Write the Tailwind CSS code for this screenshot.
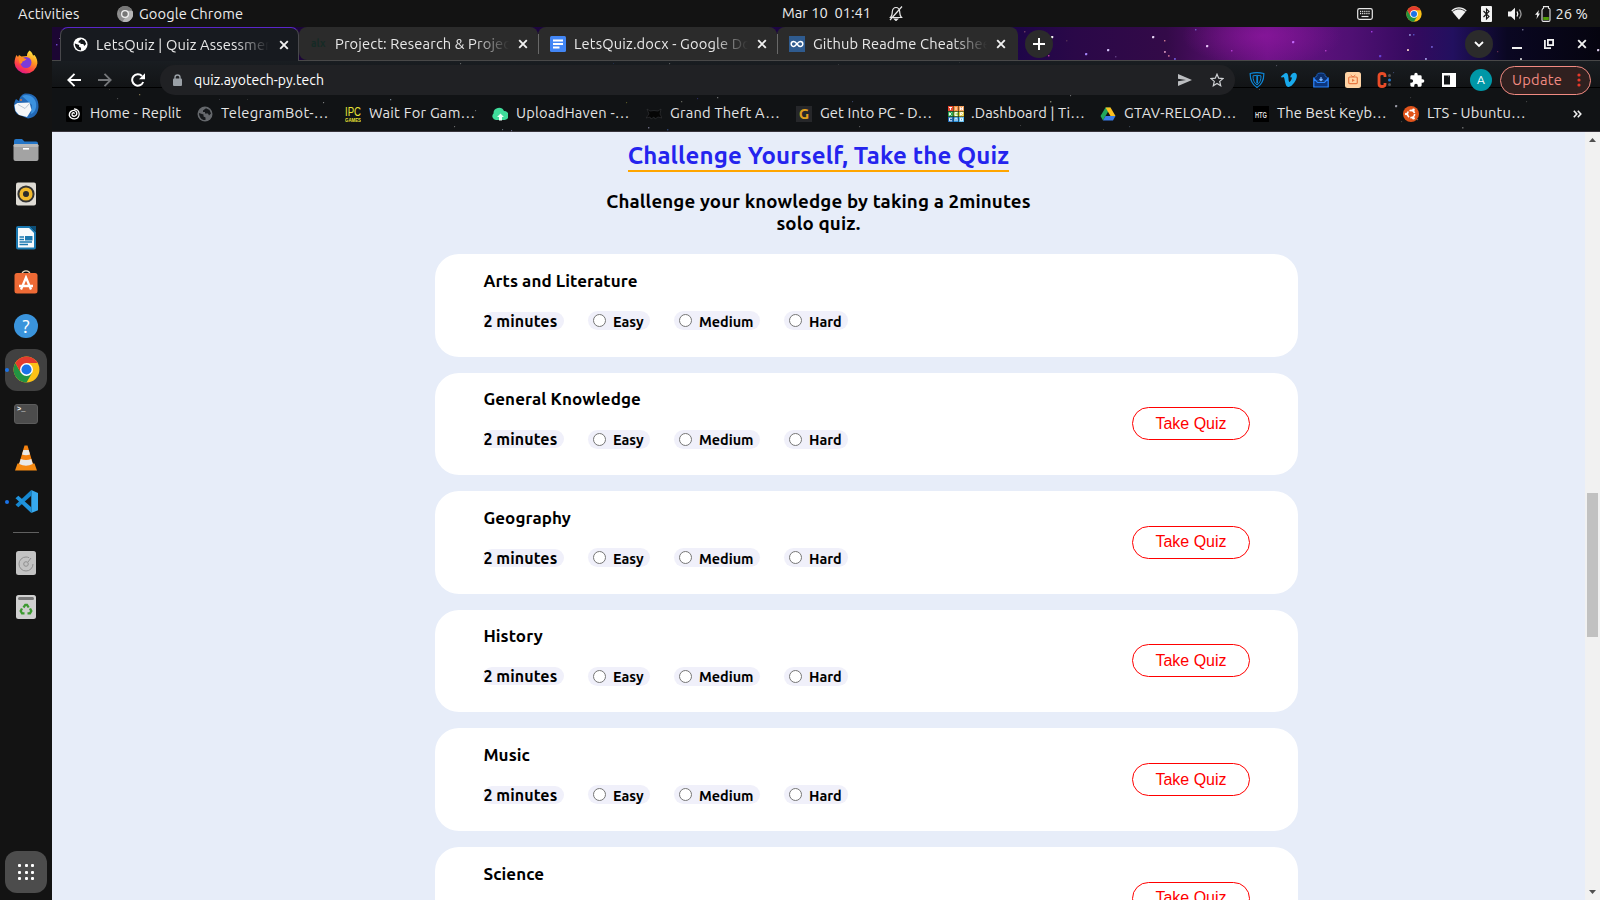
<!DOCTYPE html>
<html lang="en">
<head>
<meta charset="utf-8">
<title>LetsQuiz | Quiz Assessment</title>
<script src="https://cdn.jsdelivr.net/npm/@tailwindcss/browser@4"></script>
</head>
<body class="w-[1600px] h-[900px] overflow-hidden bg-[#131313] font-['Ubuntu','Noto_Sans',sans-serif] flex flex-col">

<svg class="hidden">
  <defs>
    <symbol id="chrome" viewBox="0 0 48 48">
      <circle cx="24" cy="24" r="23" fill="#fbc116"/>
      <path d="M4.100 12.500A23 23 0 0 0 24 47L34 29.700 24 24 14 29.700Z" fill="#229342"/>
      <path d="M4.100 12.500A23 23 0 0 1 43.900 12.500H24L14 29.700Z" fill="#e33b2e"/>
      <circle cx="24" cy="24" r="11.500" fill="#fff"/><circle cx="24" cy="24" r="9" fill="#1a73e8"/>
    </symbol>
    <symbol id="globe" viewBox="0 0 16 16">
      <circle cx="8" cy="8" r="7.500" fill="currentColor"/>
      <path d="M2 7 6.500 8.500V10.500L8.500 11.500V14C5 14.500 2 11.500 2 7ZM6 4.500 9 2.200 12.500 4 14 7.500 12 9.500 11 7.500H8V6H6Z" fill="#15181b"/>
    </symbol>
    <symbol id="x" viewBox="0 0 10 10"><path d="M1.200 1.200 8.800 8.800M8.800 1.200 1.200 8.800" stroke="#f1f1f1" stroke-width="1.900"/></symbol>
  </defs>
</svg>

<header class="h-[27px] shrink-0 flex items-center text-[14.670px] text-[#ececec] leading-none whitespace-nowrap">
  <span class="ml-[18px] w-[99px] pt-px tracking-[0.15px]">Activities</span>
  <svg class="size-4 mr-[6px]" viewBox="0 0 16 16"><circle cx="8" cy="8" r="8" fill="#8d8d8d"/><path d="M8 4.200H15A8 8 0 0 0 1.500 3.500L4.600 9.500Z" fill="#777"/><path d="M8 12 5.500 15.600A8 8 0 0 0 15.500 5H10Z" fill="#b5b5b5"/><circle cx="8" cy="8" r="4" fill="#f2f2f2"/><circle cx="8" cy="8" r="2.700" fill="#777"/></svg>
  <span class="w-[643px] pt-px tracking-[0.1px]">Google Chrome</span>
  <span class="w-[107px] whitespace-pre">Mar 10  01:41</span>
  <svg class="w-[14px] h-[15px] mr-[453.600px]" viewBox="0 0 14 15" fill="none" stroke="#e8e8e8" stroke-width="1.200"><path d="M1.500 11.500C3.500 9.500 3 8 3.300 5.500 3.700 2.500 5 1.500 7 1.500S10.300 2.500 10.700 5.500C11 8 10.500 9.500 12.500 11.500ZM1 14 13 0.500"/><path d="M5.500 13H8.500L7 14.500Z" fill="#e8e8e8"/></svg>
  <svg class="w-[16px] h-[12px] mr-[33px]" viewBox="0 0 16 12"><rect x=".7" y=".7" width="14.600" height="10.600" rx="1.800" fill="none" stroke="#e8e8e8" stroke-width="1.200"/><path d="M3 3.500H13M3 5.700H13" stroke="#e8e8e8" stroke-width="1.300" stroke-dasharray="1.200 .9"/><path d="M4.500 8.500H11.500" stroke="#e8e8e8" stroke-width="1.200"/></svg>
  <svg class="size-4 mr-[29px]"><use href="#chrome"/></svg>
  <svg class="w-[16px] h-[13px] mr-[14px]" viewBox="0 0 16 13"><path d="M.3 3.400C5-.9 11-.9 15.700 3.400L8 12.800Z" fill="#f2f2f2"/><path d="M1.300 4.600C5.500 1.200 10.500 1.200 14.700 4.600" fill="none" stroke="#131313" stroke-width=".8"/></svg>
  <svg class="w-[11px] h-[16px] mr-[16px]" viewBox="0 0 11 16"><rect width="11" height="16" rx="1" fill="#f2f2f2"/><path d="M2.500 5 8 10.500 5.500 13V3L8 5.500 2.500 11" fill="none" stroke="#131313" stroke-width="1.100"/></svg>
  <svg class="w-[15px] h-[14px] mr-[12px]" viewBox="0 0 15 14"><path d="M0 4.500H3L7 .8V13.200L3 9.500H0Z" fill="#f2f2f2"/><path d="M9 4.500Q10.600 7 9 9.500" fill="none" stroke="#f2f2f2" stroke-width="1.300"/><path d="M11.300 2.500Q14.800 7 11.300 11.500" fill="none" stroke="#999" stroke-width="1.300"/></svg>
  <svg class="w-[16px] h-[16px] mr-[5px]" viewBox="0 0 16 16"><path d="M4 4 0 8.800H2.200L1.500 13 5 7.600H3.200Z" fill="#f2f2f2"/><path d="M7.500 3.200Q7.500 2.500 8.500 2.300V.6H13.500V2.300Q15 2.500 15 3.500V14Q15 15.400 13.600 15.400H8.400Q7 15.400 7 14V4Z" fill="none" stroke="#e8e8e8" stroke-width="1.100"/><rect x="8.200" y="11" width="5.600" height="3" fill="#4e9a06"/></svg>
  <span class="pt-px">26 %</span>
</header>

<div class="flex flex-1 min-h-0">
  <nav class="w-[52px] shrink-0 flex flex-col items-center pt-[12.500px]">
    <div class="h-11 flex items-center"><svg class="size-[24px]" viewBox="0 0 24 24"><defs><linearGradient id="ff" x1=".8" y1="0" x2=".3" y2="1"><stop offset="0" stop-color="#fff14a"/><stop offset=".4" stop-color="#ff9a1f"/><stop offset=".75" stop-color="#ff3d4a"/><stop offset="1" stop-color="#d9158c"/></linearGradient></defs><path d="M15.500.5C18 2 18.500 4 19 5.500L20.500 5C23 8 23.500 11 23.400 13.500A11.500 11.200 0 0 1 .5 13C.5 9.500 1.500 7 2.500 5L4 7 5 5 7.500 6.500 13 6C12.800 4 14 2 15.500.5Z" fill="url(#ff)"/><circle cx="12" cy="12.500" r="5.500" fill="#7b3bd8"/><path d="M4.500 8.500C7 7 10 7.500 12.500 9.500 10.500 10.500 9 11.500 8.500 11.500 8 14 6.500 14 5.500 13Z" fill="#ff8a22"/></svg></div>
    <div class="h-11 flex items-center"><svg class="size-[26px]" viewBox="0 0 26 26"><path d="M13 .5C22 .5 25.800 6 25.500 14 25 20 22 25 15 25.500L4 21C0 16 .5 10 3 6L6 8C6.500 3 10 .5 13 .5Z" fill="#2268b5"/><path d="M9 3C15 0 22 4 23 10 24 16 21 20 18 21L19 12Z" fill="#3b92e0"/><path d="M1.500 12 4.500 10 16.500 9.500 18.500 17 14 24 6 22 2.500 18Z" fill="#f4f6f8"/><path d="M5 11.500 12 15.500 17 10" fill="none" stroke="#b9c6d3"/><circle cx="8" cy="7" r="1" fill="#d8733b"/></svg></div>
    <div class="h-11 flex items-center"><svg class="w-[26px] h-[24px]" viewBox="0 0 26 24"><path d="M1 3Q1 1 3 1H9L11.500 3.500H23Q25 3.500 25 5.500V12H1Z" fill="#2476c8"/><rect x=".5" y="6" width="25" height="17" rx="2" fill="#a3a3a3"/><rect x=".5" y="6" width="25" height="3" rx="1.500" fill="#b9b9b9"/><rect x="10" y="10" width="6" height="1.600" fill="#fff"/></svg></div>
    <div class="h-11 flex items-center"><svg class="w-[22px] h-[24px]" viewBox="0 0 22 24"><rect x="1" y=".5" width="20" height="23" rx="2" fill="#dedbd4"/><circle cx="11" cy="12" r="8.600" fill="#333"/><circle cx="11" cy="12" r="4.800" fill="none" stroke="#f0b92c" stroke-width="3.600"/><circle cx="11" cy="12" r="2.600" fill="#2b2b2b"/></svg></div>
    <div class="h-11 flex items-center"><svg class="w-[22px] h-[24px]" viewBox="0 0 22 24"><path d="M3 1H14.500L20 6.500V21.500Q20 22.500 19 22.500H3Q2 22.500 2 21.500V2Q2 1 3 1Z" fill="#f7fafc" stroke="#1a78b0" stroke-width="2"/><path d="M15 0H21V6Z" fill="#0d4f78"/><path d="M4.500 11H9M4.500 13.500H9M4.500 16H17M4.500 18.500H13" stroke="#1a78b0" stroke-width="1.300"/><rect x="10" y="10" width="7.500" height="4.500" fill="#1a78b0"/></svg></div>
    <div class="h-11 flex items-center"><svg class="w-[24px] h-[24px]" viewBox="0 0 24 24"><path d="M8 4Q8.500.8 12 .8T16 4" fill="none" stroke="#e8d9c0" stroke-width="1.300"/><rect x=".5" y="3" width="23" height="20.500" rx="2.500" fill="#ee6a35"/><path d="M7 19.500 12 7.500 17 19.500M5 16H19" fill="none" stroke="#fff" stroke-width="2.300"/></svg></div>
    <div class="h-11 flex items-center"><div class="size-6 rounded-full bg-[#3a94dc] text-white text-[19px] leading-6 text-center">?</div></div>
    <div class="relative h-11 flex items-center"><div class="size-[42px] rounded-[12px] bg-[#414141] flex items-center justify-center"><svg class="size-[27px]"><use href="#chrome"/></svg></div><span class="absolute left-0 top-[20px] size-1 rounded-full bg-[#1a73e8]"></span></div>
    <div class="h-11 flex items-center"><div class="w-6 h-5 rounded-[3px] bg-[#4c4c4c] border border-[#5c5c5c] text-white font-['Liberation_Mono'] font-bold text-[7px] leading-[9px] pl-[2px]">&gt;_</div></div>
    <div class="h-11 flex items-center"><svg class="w-[22px] h-[26px]" viewBox="0 0 22 26"><path d="M2.500 18.500H19.500L22 25.500H0Z" fill="#f58a12"/><path d="M9.500 .5H12.500L18 19Q11 23.500 4 19Z" fill="#f58210"/><path d="M8.300 5H13.700L15 9.500Q11 11 7 9.500ZM5.700 14Q11 16 16.300 14L17.800 19Q11 22.500 4.200 19Z" fill="#e9e9e9"/></svg></div>
    <div class="relative h-11 w-[42px] flex items-center justify-center"><span class="absolute left-0 top-[20px] size-1 rounded-full bg-[#1a73e8]"></span><svg class="size-[23px]" viewBox="0 0 24 24"><path d="M17 0 24 3V21L17 24Z" fill="#36a8ee"/><path d="M17 0V6L3.500 18 .5 15.500Z" fill="#1587d1"/><path d="M17 24V18L3.500 6 .5 8.500Z" fill="#1f93dd"/></svg></div>
    <div class="h-[17px] flex items-center"><div class="w-[26px] h-px bg-[#606060]"></div></div>
    <div class="h-11 flex items-center"><svg class="w-[20px] h-[24px]" viewBox="0 0 20 24"><rect width="20" height="24" rx="2.500" fill="#c3c3c3"/><circle cx="10" cy="13" r="7" fill="none" stroke="#8f8f8f" stroke-dasharray="36 8"/><circle cx="10" cy="13" r="2.300" fill="none" stroke="#8f8f8f"/><path d="M12 11 15 7" stroke="#8f8f8f"/></svg></div>
    <div class="h-11 flex items-center"><svg class="w-[20px] h-[24px]" viewBox="0 0 20 24"><rect width="20" height="24" rx="2.500" fill="#d0d0d0"/><rect x="2" y="2" width="16" height="3" rx="1.500" fill="#777"/><path d="M7.500 12.500 9.300 9.800H11L12.700 12.500M14 13.500 15.300 16 14 18.300H11.500M8.500 18.300H6L4.700 16 6 13.500" fill="none" stroke="#3c9a30" stroke-width="2.300"/></svg></div>
    <div class="mt-auto mb-[7px] size-[42px] rounded-[12px] bg-[#4c4c4c] grid grid-cols-3 gap-[3.500px] p-[13px] place-items-center">
      <i class="size-[3px] bg-white rounded-[1px]"></i><i class="size-[3px] bg-white rounded-[1px]"></i><i class="size-[3px] bg-white rounded-[1px]"></i><i class="size-[3px] bg-white rounded-[1px]"></i><i class="size-[3px] bg-white rounded-[1px]"></i><i class="size-[3px] bg-white rounded-[1px]"></i><i class="size-[3px] bg-white rounded-[1px]"></i><i class="size-[3px] bg-white rounded-[1px]"></i><i class="size-[3px] bg-white rounded-[1px]"></i>
    </div>
  </nav>

  <div class="w-[1548px] flex flex-col">
    <div class="relative h-[105px] shrink-0 flex flex-col bg-[#131619] text-[14.670px] leading-none text-[#e4e4e4] tracking-[0.14px]">
      <svg class="absolute inset-0 w-[1548px] h-[105px]" viewBox="52 27 1548 105">
        <defs>
          <linearGradient id="sky"><stop offset="0" stop-color="#1c0633"/><stop offset=".62" stop-color="#1d0548"/><stop offset=".66" stop-color="#2a0848"/><stop offset=".72" stop-color="#330a48"/><stop offset=".785" stop-color="#6d1286"/><stop offset=".84" stop-color="#4f1073"/><stop offset=".88" stop-color="#340a5e"/><stop offset=".905" stop-color="#22105f"/><stop offset=".94" stop-color="#0a0722"/><stop offset="1" stop-color="#05040f"/></linearGradient>
          <radialGradient id="neb"><stop offset="0" stop-color="#9418a4" stop-opacity=".6"/><stop offset="1" stop-color="#9418a4" stop-opacity="0"/></radialGradient>
          <linearGradient id="bar" x2="0" y2="1"><stop offset="0" stop-color="#191d21"/><stop offset="1" stop-color="#121416"/></linearGradient>
        </defs>
        <rect x="52" y="27" width="1548" height="34" fill="url(#sky)"/>
        <ellipse cx="1262" cy="36" rx="80" ry="30" fill="url(#neb)"/>
        <rect x="52" y="61" width="1548" height="26" fill="url(#bar)"/>
        <rect x="52" y="88" width="1548" height="44" fill="#111315"/>
        <rect x="52" y="87" width="1548" height="1" fill="#000"/>
        <rect x="52" y="60" width="1548" height="1" fill="#484848"/>
        <rect x="52" y="131" width="1548" height="1" fill="#38343c"/>
        <g id="stars"></g>
      </svg>

      <div class="relative h-[34px] flex pl-[8px] text-[#e8e8e8]">
        <div class="w-[239px] h-[34px] rounded-t-[8px] bg-[#171a1f] border-t border-x border-t-[#5a26c9] border-x-[#48484c] flex items-center pl-[12px]">
          <svg class="size-[15px] mr-[8px] text-white"><use href="#globe"/></svg>
          <span class="w-[173px] overflow-hidden whitespace-nowrap pt-[6px] pb-1 mask-r-from-80% mask-r-to-100%">LetsQuiz | Quiz Assessment</span>
          <svg class="size-[10px] ml-[10px]"><use href="#x"/></svg>
        </div>
        <div class="w-[239px] h-[33px] rounded-t-[8px] rounded-bl-[8px] bg-[#2b2b2b] flex items-center pl-[12px]">
          <span class="w-[16px] mr-[8px] text-[#152a25] text-[10px] font-bold">alx</span>
          <span class="w-[174px] overflow-hidden whitespace-nowrap pt-[6px] pb-1 mask-r-from-80% mask-r-to-100%">Project: Research &amp; Project</span>
          <svg class="size-[10px] ml-[9px]"><use href="#x"/></svg>
        </div>
        <div class="w-[239px] h-[33px] rounded-t-[8px] bg-[#2b2b2b] flex items-center"><i class="w-px h-5 bg-[#686868] mr-[11px]"></i>
          <svg class="size-4 mr-[8px]" viewBox="0 0 16 16"><rect width="16" height="16" rx="1.500" fill="#4286f5"/><path d="M3 4.500H13M3 8H13M3 11.500H9.500" stroke="#fff" stroke-width="1.800"/></svg>
          <span class="w-[174px] overflow-hidden whitespace-nowrap pt-[6px] pb-1 mask-r-from-80% mask-r-to-100%">LetsQuiz.docx - Google Docs</span>
          <svg class="size-[10px] ml-[9px]"><use href="#x"/></svg>
        </div>
        <div class="w-[241px] h-[33px] rounded-t-[8px] bg-[#2b2b2b] flex items-center"><i class="w-px h-5 bg-[#686868] mr-[11px]"></i>
          <svg class="size-4 mr-[8px]" viewBox="0 0 16 16"><rect width="16" height="16" fill="#2f5b8f"/><path d="M8 8C6.500 5.800 5.500 5.500 4.700 5.500A2.500 2.500 0 0 0 4.700 10.500C6.500 10.500 9 5.500 11.300 5.500A2.500 2.500 0 0 1 11.300 10.500C10.500 10.500 9.500 10.200 8 8Z" fill="none" stroke="#fff" stroke-width="1.500"/></svg>
          <span class="w-[174px] overflow-hidden whitespace-nowrap pt-[6px] pb-1 mask-r-from-80% mask-r-to-100%">Github Readme Cheatsheet</span>
          <svg class="size-[10px] ml-[9px]"><use href="#x"/></svg>
        </div>
        <div class="ml-[7px] mt-[3px] size-7 rounded-full bg-[#2b2b2b] flex items-center justify-center"><svg class="size-3" viewBox="0 0 12 12"><path d="M6 0V12M0 6H12" stroke="#fff" stroke-width="2"/></svg></div>
        <div class="ml-auto mr-[13px] flex items-center h-[34px]">
          <div class="size-7 rounded-full bg-[#2b2b2b] flex items-center justify-center mr-[19px]"><svg class="w-[10px] h-[7px]" viewBox="0 0 10 7"><path d="M1 1 5 5 9 1" fill="none" stroke="#fff" stroke-width="1.800"/></svg></div>
          <svg class="w-[10px] h-[10px] mr-[22px]" viewBox="0 0 10 10"><path d="M0 9H10" stroke="#f1f1f1" stroke-width="2"/></svg>
          <svg class="w-[10px] h-[10px] mr-[23px]" viewBox="0 0 10 10" fill="none" stroke="#f1f1f1" stroke-width="1.800"><rect x="3.900" y=".9" width="5.200" height="5.200"/><path d="M.9 1V9.100H7"/></svg>
          <svg class="size-[10px]"><use href="#x"/></svg>
        </div>
      </div>

      <div class="relative h-[37px] flex items-center pl-[15px] pt-px">
        <svg class="size-[14px] mr-[17px]" viewBox="0 0 14 14" fill="none" stroke="#fff" stroke-width="1.900"><path d="M14 7H1.500M7.500 .8 1.300 7 7.500 13.200"/></svg>
        <svg class="size-[14px] mr-[19px]" viewBox="0 0 14 14" fill="none" stroke="#75777a" stroke-width="1.800"><path d="M0 7H12.500M6.500 .8 12.700 7 6.500 13.200"/></svg>
        <svg class="size-[14px] mr-[15px]" viewBox="0 0 14 14"><path d="M12.200 9A5.700 5.700 0 1 1 11 3" fill="none" stroke="#fff" stroke-width="2"/><path d="M14 .2V6.200H8Z" fill="#fff"/></svg>
        <div class="w-[1075px] h-[30px] rounded-full bg-[#202124] flex items-center pl-[13px]">
          <svg class="w-[9px] h-[12px] mr-[12px]" viewBox="0 0 9 12"><rect y="4.500" width="9" height="7.500" rx="1" fill="#9aa0a6"/><path d="M2 5V3.300Q2 1 4.500 1T7 3.300V5" fill="none" stroke="#9aa0a6" stroke-width="1.400"/></svg>
          <span class="text-[14px] text-white tracking-[0.04px]">quiz.ayotech-py.tech</span>
          <svg class="w-[14px] h-[12px] ml-auto mr-[18px]" viewBox="0 0 14 12"><path d="M0 0 14 6 0 12V7.300L8 6 0 4.700Z" fill="#bcbec1"/></svg>
          <svg class="size-[14px] mr-[11px]" viewBox="0 0 14 14"><path d="M7 1.200 8.700 5.200 13 5.600 9.700 8.400 10.700 12.700 7 10.400 3.300 12.700 4.300 8.400 1 5.600 5.300 5.200Z" fill="none" stroke="#d0d2d5" stroke-width="1.200"/></svg>
        </div>
        <div class="flex items-center gap-4 ml-[14px]">
          <svg class="size-4" viewBox="0 0 16 16" fill="none" stroke="#0d87d8"><path d="M1.200 1.500Q8-.2 14.800 1.500C15 8 12 13 8 15.500 4 13 1 8 1.200 1.500Z" stroke-width="1.200"/><path d="M4 3.800Q8 2.800 12 3.800C12 8 11 10.800 8 13 5 10.800 4 8 4 3.800Z"/><path d="M8.200 4V11.500" stroke-width="1.800"/></svg>
          <svg class="size-4" viewBox="0 0 16 16"><path d="M0 4.600C2 3 3.700 1.200 5 1.100 8.200.9 7 8.500 8.200 10 9 10.600 11.200 6.800 10.800 5.800 10.500 5 9.500 5.200 9 5.400 10 1.700 12.500.6 14 .9 19 2 13 14.500 7.500 15 3.500 15.500 4.200 4.500 2.200 5.100L.8 5.800Z" fill="#18a9ec"/></svg>
          <svg class="size-4" viewBox="0 0 16 16"><path d="M1.500 5.500 4 4V2.500Q4 1 8 1T12 2.500V4L14.500 5.500V9H1.500Z" fill="#0b2d68" stroke="#1d5cb4" stroke-width="1"/><path d="M.8 6.500V15H15.200V6.500L11.500 10.500H4.500Z" fill="#0d367c" stroke="#2b86ff" stroke-width="1.200"/><path d="M8 5V8.500M6.500 7 8 8.700 9.500 7" fill="none" stroke="#7db6ff" stroke-width="1.200"/></svg>
          <svg class="size-4" viewBox="0 0 16 16"><rect width="16" height="16" rx="2.500" fill="#ffd3a4"/><rect x="3.700" y="5" width="8.600" height="6.600" rx="1" fill="none" stroke="#e87843" stroke-width="1.200"/><path d="M5.700 3 8 5 10.300 3" fill="none" stroke="#e87843"/><path d="M7 6.700V10L9.800 8.300Z" fill="#e87843"/></svg>
          <svg class="size-4" viewBox="0 0 16 16"><path d="M8 5V3.500Q8 1.500 5 1.500T2 4V12Q2 14.500 5 14.500T8 12.500V11" fill="none" stroke="#ea4c28" stroke-width="2.800"/><circle cx="12.500" cy="3.500" r="1.500" fill="#555"/><circle cx="12.500" cy="8" r="1.500" fill="#2477c9"/><circle cx="12.500" cy="12.500" r="1.500" fill="#555"/></svg>
          <svg class="size-4" viewBox="0 0 24 24"><path d="M20.500 11H19V7a2 2 0 0 0-2-2h-4V3.500a2.500 2.500 0 0 0-5 0V5H4a2 2 0 0 0-2 2v3.800h1.500a2.700 2.700 0 0 1 0 5.400H2V20a2 2 0 0 0 2 2h3.800v-1.500a2.700 2.700 0 0 1 5.400 0V22H17a2 2 0 0 0 2-2v-4h1.500a2.500 2.500 0 0 0 0-5Z" fill="#fff"/></svg>
          <svg class="size-4" viewBox="0 0 16 16"><path d="M1 1H15V15H1ZM3 3.500V12.500H9V3.500Z" fill="#fff" fill-rule="evenodd"/></svg>
        </div>
        <div class="ml-[13px] size-[22px] shrink-0 rounded-full bg-[#0097a7] text-white text-[12px] leading-[22px] text-center">A</div>
        <div class="ml-[8px] w-[91px] h-[29px] shrink-0 rounded-full border border-[#f28b82] bg-[#30201f] text-[#f28b82] flex items-center pl-[11px]"><span class="w-[51px] tracking-[0.25px]">Update</span>
          <svg class="w-[4px] h-[14px] ml-[14px]" viewBox="0 0 4 14" fill="#e8392b"><circle cx="2" cy="2" r="1.600"/><circle cx="2" cy="7" r="1.600"/><circle cx="2" cy="12" r="1.600"/></svg></div>
      </div>

      <div class="relative h-[32px] flex items-center pl-[14px] pb-px whitespace-nowrap">
        <div class="w-[131px] flex items-center gap-2"><svg class="size-4" viewBox="0 0 16 16"><rect width="16" height="16" rx="1" fill="#000"/><path d="M8 8Q8.500 6.500 7.200 6.700T6 9Q7.500 11 9.500 9.800T10.500 6Q8.500 3.700 5.800 4.800T3.300 9.500Q4.800 13.200 8.800 12.900T13.200 8Q13 3.200 8 2.800" fill="none" stroke="#fff" stroke-width="1.300"/></svg><span>Home - Replit</span></div>
        <div class="w-[148px] flex items-center gap-2"><svg class="size-4 text-[#65686c]"><use href="#globe"/></svg><span class="tracking-[0.3px]">TelegramBot-…</span></div>
        <div class="w-[147px] flex items-center gap-2"><svg class="size-4" viewBox="0 0 16 16"><g fill="#e8e337" font-family="Liberation Sans" letter-spacing="0"><text x="0" y="10" font-size="13" textLength="16" lengthAdjust="spacingAndGlyphs">IPC</text><text x="0" y="15.500" font-size="6" font-weight="bold" textLength="16" lengthAdjust="spacingAndGlyphs">GAMES</text></g></svg><span class="tracking-[0.25px]">Wait For Gam…</span></div>
        <div class="w-[154px] flex items-center gap-2"><svg class="size-4" viewBox="0 0 16 16"><path d="M4 14A3.800 3.800 0 0 1 1.500 7.500 5.500 5.500 0 0 1 12 5 4.500 4.500 0 0 1 12.500 14Z" fill="#3fdc9b"/><path d="M7 14.500V11H5L8.500 7.500 12 11H10V14.500Z" fill="#eafff5"/></svg><span class="tracking-[0.22px]">UploadHaven -…</span></div>
        <div class="w-[150px] flex items-center gap-2"><svg class="size-4" viewBox="0 0 16 16"><path d="M1 3 4 5 8 4.500 12 5 15 3 14 8 16 12 12 11 9 13 8 11 5 13 4 11 0 12 3 8Z" fill="#050505" stroke="#35373a" stroke-width=".6"/></svg><span class="tracking-[0.22px]">Grand Theft A…</span></div>
        <div class="w-[152px] flex items-center gap-2"><span class="size-4 bg-[#26272a] text-[#e0a01e] font-bold text-[15px] leading-4 text-center">G</span><span>Get Into PC - D…</span></div>
        <div class="w-[152px] flex items-center gap-[7px]"><svg class="size-4" viewBox="0 0 16 16"><path d="M0 0H5V5H0Z" fill="#e8452c"/><path d="M5.500 0H10.500V5H5.500Z" fill="#f7913d"/><path d="M11 0H16V5H11Z" fill="#f5a15e"/><path d="M0 5.500H5V10.500H0Z" fill="#2ea84f"/><path d="M5.500 5.500H10.500V10.500H5.500Z" fill="#8fc640"/><path d="M11 5.500H16V10.500H11Z" fill="#e2cc3a"/><path d="M0 11H5V16H0Z" fill="#1a68b5"/><path d="M5.500 11H10.500V16H5.500Z" fill="#2a92dd"/><path d="M11 11H16V16H11Z" fill="#55b8ee"/><path d="M1 1.500H4M2.500 1.500V4M8 1V4M12.500 4V1.500L14.500 4V1M1.500 6.500V9.500M3.500 6.500 2 8 3.500 9.500M9.500 6.500H7V9.500H9.500M7 8H9M12.500 9.500V6.500H14.500V8L13 8.200 14.500 9.500M4 12.200H1.500V14.800H4M7 15V12.200H9V15M12.500 12.200V14.800H14.500V12.200Z" stroke="#fff" stroke-width=".9" fill="none"/></svg><span class="tracking-[0.1px]">.Dashboard | Ti…</span></div>
        <div class="w-[153px] flex items-center gap-2"><svg class="size-4" viewBox="0 0 16 16"><path d="M5.500 1.500H10.500L5.500 10 3 14.500.5 10Z" fill="#22a75d"/><path d="M5.500 1.500H10.500L15.500 10H10.500Z" fill="#fdc120"/><path d="M5.500 10H15.500L13 14.500H3Z" fill="#3b7de9"/></svg><span class="tracking-[0.3px]">GTAV-RELOAD…</span></div>
        <div class="w-[150px] flex items-center gap-2"><svg class="size-4" viewBox="0 0 16 16"><rect width="16" height="16" fill="#000"/><text x="2" y="11.500" font-size="9.500" font-family="Liberation Sans" font-weight="bold" fill="#ddd" letter-spacing="0" textLength="12" lengthAdjust="spacingAndGlyphs">HTG</text></svg><span>The Best Keyb…</span></div>
        <div class="w-[170px] flex items-center gap-2"><svg class="size-4" viewBox="0 0 16 16"><circle cx="8" cy="8" r="8" fill="#e2541b"/><circle cx="8" cy="8" r="3.600" fill="none" stroke="#fff" stroke-width="1.600" stroke-dasharray="6.200 1.300" /><circle cx="3.200" cy="8" r="1.300" fill="#fff"/><circle cx="10.500" cy="3.800" r="1.300" fill="#fff"/><circle cx="10.500" cy="12.200" r="1.300" fill="#fff"/></svg><span>LTS - Ubuntu…</span></div>
        <svg class="w-[9px] h-[8px]" viewBox="0 0 9 8"><path d="M.8.8 3.800 4 .8 7.200M4.800.8 7.800 4 4.800 7.200" fill="none" stroke="#f1f1f1" stroke-width="1.600"/></svg>
      </div>
    </div>

    <main class="flex flex-1 min-h-0 bg-[#e7edf9] text-black font-bold">
      <section class="w-[1533px] overflow-hidden flex flex-col items-center pt-[8px]">
        <h2 class="h-[32px] border-b-2 border-[#ffa500] text-[#2424ee] text-[24px] leading-[31px] tracking-[0.16px]">Challenge Yourself, Take the Quiz</h2>
        <p class="mt-[19px] text-[18.720px] leading-[22px] text-center tracking-[0.13px]">Challenge your knowledge by taking a 2minutes<br>solo quiz.</p>
        <div id="quizzes" class="mt-[19.100px] ml-[96px] w-[863px] flex flex-col gap-4"></div>
      </section>
      <aside class="w-[15px] bg-[#f1f1f1] flex flex-col items-center">
        <svg class="w-[7px] h-[4px] mt-[6px]" viewBox="0 0 7 4"><path d="M3.500 0 7 4H0Z" fill="#505050"/></svg>
        <div class="mt-[351px] w-[11px] h-[144px] bg-[#c1c1c1]"></div>
        <svg class="w-[7px] h-[4px] mt-auto mb-[6px]" viewBox="0 0 7 4"><path d="M0 0H7L3.500 4Z" fill="#505050"/></svg>
      </aside>
    </main>
  </div>
</div>

<script>
  const topics = ['Arts and Literature', 'General Knowledge', 'Geography', 'History', 'Music', 'Science'];
  const levels = [['Easy', 'w-[62px]'], ['Medium', 'w-[86px]'], ['Hard', 'w-[64px]']];
  document.getElementById('quizzes').innerHTML = topics.map((name, i) => `
    <article class="h-[102.600px] shrink-0 rounded-[24px] bg-white px-12 flex items-center justify-between">
      <div class="h-full pt-[15.600px] pl-[0.400px]">
        <h3 class="text-[17px] leading-[22px] whitespace-nowrap tracking-[0.08px]">${name}</h3>
        <div class="mt-[19.400px] flex gap-6 items-center">
          <div class="w-[81px] h-[18px] rounded-full bg-[#f0f0fa] text-[16px] leading-[19px] whitespace-nowrap tracking-[0.08px]">2 minutes</div>
          ${levels.map(([l, c]) => `<label class="${c} h-[19px] rounded-full bg-[#f0f0fa] flex items-center pl-[5px]"><i class="size-[13px] rounded-full border border-[#767676] bg-white mr-[6.600px] shrink-0"></i><span class="text-[14.400px] leading-[19px] pt-[3px]">${l}</span></label>`).join('')}
        </div>
      </div>
      ${i ? `<button class="mb-[0.500px] w-[118px] h-[33px] rounded-full border border-[#f00] text-[#f00] font-normal text-[16px] leading-none font-['Liberation_Sans']">Take Quiz</button>` : ''}
    </article>`).join('');

  // Stars: x, y, size, colour
  const stars = [
    [56,44,1,'#7a4fe0'],[59,38,.7,'#8a70a8'],[151,33,.8,'#555'],[253,31,.8,'#665f80'],[201,31,.8,'#555'],[460,63,1,'#999'],[669,63,1,'#888'],[613,63,.8,'#334a88'],[838,64,.7,'#888'],[959,62,.7,'#666'],
    [139,94,1.1,'#c9b070'],[117,98,1,'#777'],[109,89,.8,'#776'],[219,99,.8,'#667'],[323,102,1,'#ccc'],[390,99,1.1,'#bcd'],[372,109,1,'#9ad'],[300,108,1,'#996'],[475,110,1,'#aaa'],[454,126,1,'#aaa'],[502,129,1,'#9ab'],[511,130,1,'#99c'],[247,99,.8,'#666'],
    [648,127,1.2,'#aac'],[667,129,1.2,'#46a'],[681,101,1.1,'#998'],[717,97,1.1,'#aaa'],[626,102,1,'#883'],[697,98,1,'#449'],[852,101,1,'#569'],[859,126,1,'#888'],[1050,101,1.2,'#cca'],[1051,107,1,'#787'],[984,119,1,'#555'],[1020,125,.9,'#666'],
    [1131,65,1,'#aaa'],[1276,65,1,'#778'],[1395,105,1.8,'#dde'],[1199,119,1.4,'#4a78c8'],[1196,117,1,'#999'],[1462,127,1.3,'#999'],[1393,72,1,'#569'],[1448,76,1,'#889'],[1570,78,1,'#999'],[1259,89,.8,'#aaa'],[1340,103,1,'#777'],[1410,97,1,'#555'],[1417,119,1,'#aaa'],[1401,121,1,'#665'],[1526,101,1,'#666'],[1070,95,1,'#aaa'],[1129,126,1,'#567'],[1103,129,.9,'#663'],
    [1152,36,1.5,'#f0e0ff'],[1107,49,1.5,'#d9c8ff'],[1085,53,1.5,'#a988ff'],[1206,45,1.5,'#eed0ff'],[1292,41,1.5,'#c46dff'],[1164,40,1,'#d89'],[1164,51,1.2,'#eac'],[1168,55,1.1,'#c79'],[1174,58,1.2,'#76e'],[1379,55,1.5,'#6845d8'],[1407,49,1.3,'#ffd9cc'],[1409,34,1.2,'#99d'],[1413,34,1,'#55c'],[1371,31,1,'#a4e'],[1325,50,1,'#b4c'],[1231,50,1,'#b4d'],[1431,46,1.2,'#76d'],[1425,58,1.2,'#bbf'],[1520,58,1.3,'#ddd'],[1597,49,1.5,'#dce'],[1522,29,1,'#779'],[1497,51,.9,'#735'],[1195,29,1,'#76c'],[1115,56,1,'#648'],[1051,36,1.5,'#fff'],[1048,55,1,'#c4a'],[1024,31,1,'#746'],[1066,40,1,'#535']
  ];
  document.getElementById('stars').innerHTML = stars.map(([x, y, r, c]) => {
    const s = y > 60 ? r * 1.2 : r * 1.5;
    return `<rect x="${x}" y="${y}" width="${s}" height="${s}" rx=".4" fill="${c}" opacity="${y > 60 ? .65 : .95}"/>`;
  }).join('');
</script>
</body>
</html>
